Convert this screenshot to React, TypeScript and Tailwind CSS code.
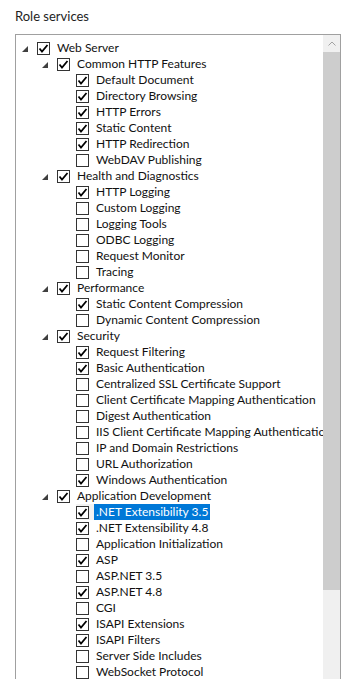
type Item = {
  label: string;
  level: 0 | 1 | 2;
  checked: boolean;
  expandable?: boolean;
  selected?: boolean;
};

const items: Item[] = [
  { label: 'Web Server', level: 0, checked: true, expandable: true },
  { label: 'Common HTTP Features', level: 1, checked: true, expandable: true },
  { label: 'Default Document', level: 2, checked: true },
  { label: 'Directory Browsing', level: 2, checked: true },
  { label: 'HTTP Errors', level: 2, checked: true },
  { label: 'Static Content', level: 2, checked: true },
  { label: 'HTTP Redirection', level: 2, checked: true },
  { label: 'WebDAV Publishing', level: 2, checked: false },
  { label: 'Health and Diagnostics', level: 1, checked: true, expandable: true },
  { label: 'HTTP Logging', level: 2, checked: true },
  { label: 'Custom Logging', level: 2, checked: false },
  { label: 'Logging Tools', level: 2, checked: false },
  { label: 'ODBC Logging', level: 2, checked: false },
  { label: 'Request Monitor', level: 2, checked: false },
  { label: 'Tracing', level: 2, checked: false },
  { label: 'Performance', level: 1, checked: true, expandable: true },
  { label: 'Static Content Compression', level: 2, checked: true },
  { label: 'Dynamic Content Compression', level: 2, checked: false },
  { label: 'Security', level: 1, checked: true, expandable: true },
  { label: 'Request Filtering', level: 2, checked: true },
  { label: 'Basic Authentication', level: 2, checked: true },
  { label: 'Centralized SSL Certificate Support', level: 2, checked: false },
  { label: 'Client Certificate Mapping Authentication', level: 2, checked: false },
  { label: 'Digest Authentication', level: 2, checked: false },
  { label: 'IIS Client Certificate Mapping Authentication', level: 2, checked: false },
  { label: 'IP and Domain Restrictions', level: 2, checked: false },
  { label: 'URL Authorization', level: 2, checked: false },
  { label: 'Windows Authentication', level: 2, checked: true },
  { label: 'Application Development', level: 1, checked: true, expandable: true },
  { label: '.NET Extensibility 3.5', level: 2, checked: true, selected: true },
  { label: '.NET Extensibility 4.8', level: 2, checked: true },
  { label: 'Application Initialization', level: 2, checked: false },
  { label: 'ASP', level: 2, checked: true },
  { label: 'ASP.NET 3.5', level: 2, checked: false },
  { label: 'ASP.NET 4.8', level: 2, checked: true },
  { label: 'CGI', level: 2, checked: false },
  { label: 'ISAPI Extensions', level: 2, checked: true },
  { label: 'ISAPI Filters', level: 2, checked: true },
  { label: 'Server Side Includes', level: 2, checked: false },
  { label: 'WebSocket Protocol', level: 2, checked: false },
];

const indent = ['pl-[4px]', 'pl-[24px]', 'pl-[43px]'];

const Checkbox = ({ checked }: { checked: boolean }) => (
  <div className="w-[13px] h-[13px] border border-[#333333] bg-white flex-shrink-0 flex items-center justify-center">
    {checked && (
      <svg width="11" height="11" viewBox="0 0 11 11">
        <polyline points="1.5,5.5 4,8.5 9.5,2" fill="none" stroke="#000" strokeWidth="1.8" />
      </svg>
    )}
  </div>
);

const Row = ({ item }: { item: Item }) => (
  <div className={`flex items-center h-4 whitespace-nowrap ${indent[item.level]}`}>
    <div className="w-[17px] h-4 flex items-center flex-shrink-0">
      {item.expandable && (
        <svg width="6" height="6" viewBox="0 0 6 6" className="ml-[2px] mt-[1px]">
          <polygon points="6,0 6,6 0,6" fill="#404040" />
        </svg>
      )}
    </div>
    <div className={`flex items-center h-4 pr-[5px] ${item.selected ? 'bg-[#f2f2f2]' : ''}`}>
      <Checkbox checked={item.checked} />
    </div>
    <span
      className={`px-[2px] h-4 leading-4 ${item.selected ? 'bg-[#0078d7] text-white' : 'text-[#111111]'}`}
    >
      {item.label}
    </span>
  </div>
);

export default function App() {
  return (
    <div
      className="w-[341px] h-[679px] overflow-hidden bg-white text-[12px]"
      style={{ fontFamily: 'Lato, "Noto Sans", sans-serif' }}
    >
      <div className="pl-[15px] pt-[8px] h-[34px] leading-4 text-[13px] text-[#1e1e1e]">Role services</div>
      <div className="ml-[15px] w-[326px] h-[660px] border border-[#a0a0a0] flex">
        <div className="flex-1 overflow-hidden pt-[5px]">
          {items.map((it) => (
            <Row key={it.label} item={it} />
          ))}
        </div>
        <div className="w-[17px] flex flex-col bg-[#f0f0f0]">
          <div className="h-[17px] flex items-center justify-center">
            <svg width="8" height="5" viewBox="0 0 8 5">
              <polyline points="0.5,4.5 4,1 7.5,4.5" fill="none" stroke="#a3a3a3" strokeWidth="1" />
            </svg>
          </div>
          <div className="h-[538px] bg-[#cdcdcd]" />
        </div>
      </div>
    </div>
  );
}
